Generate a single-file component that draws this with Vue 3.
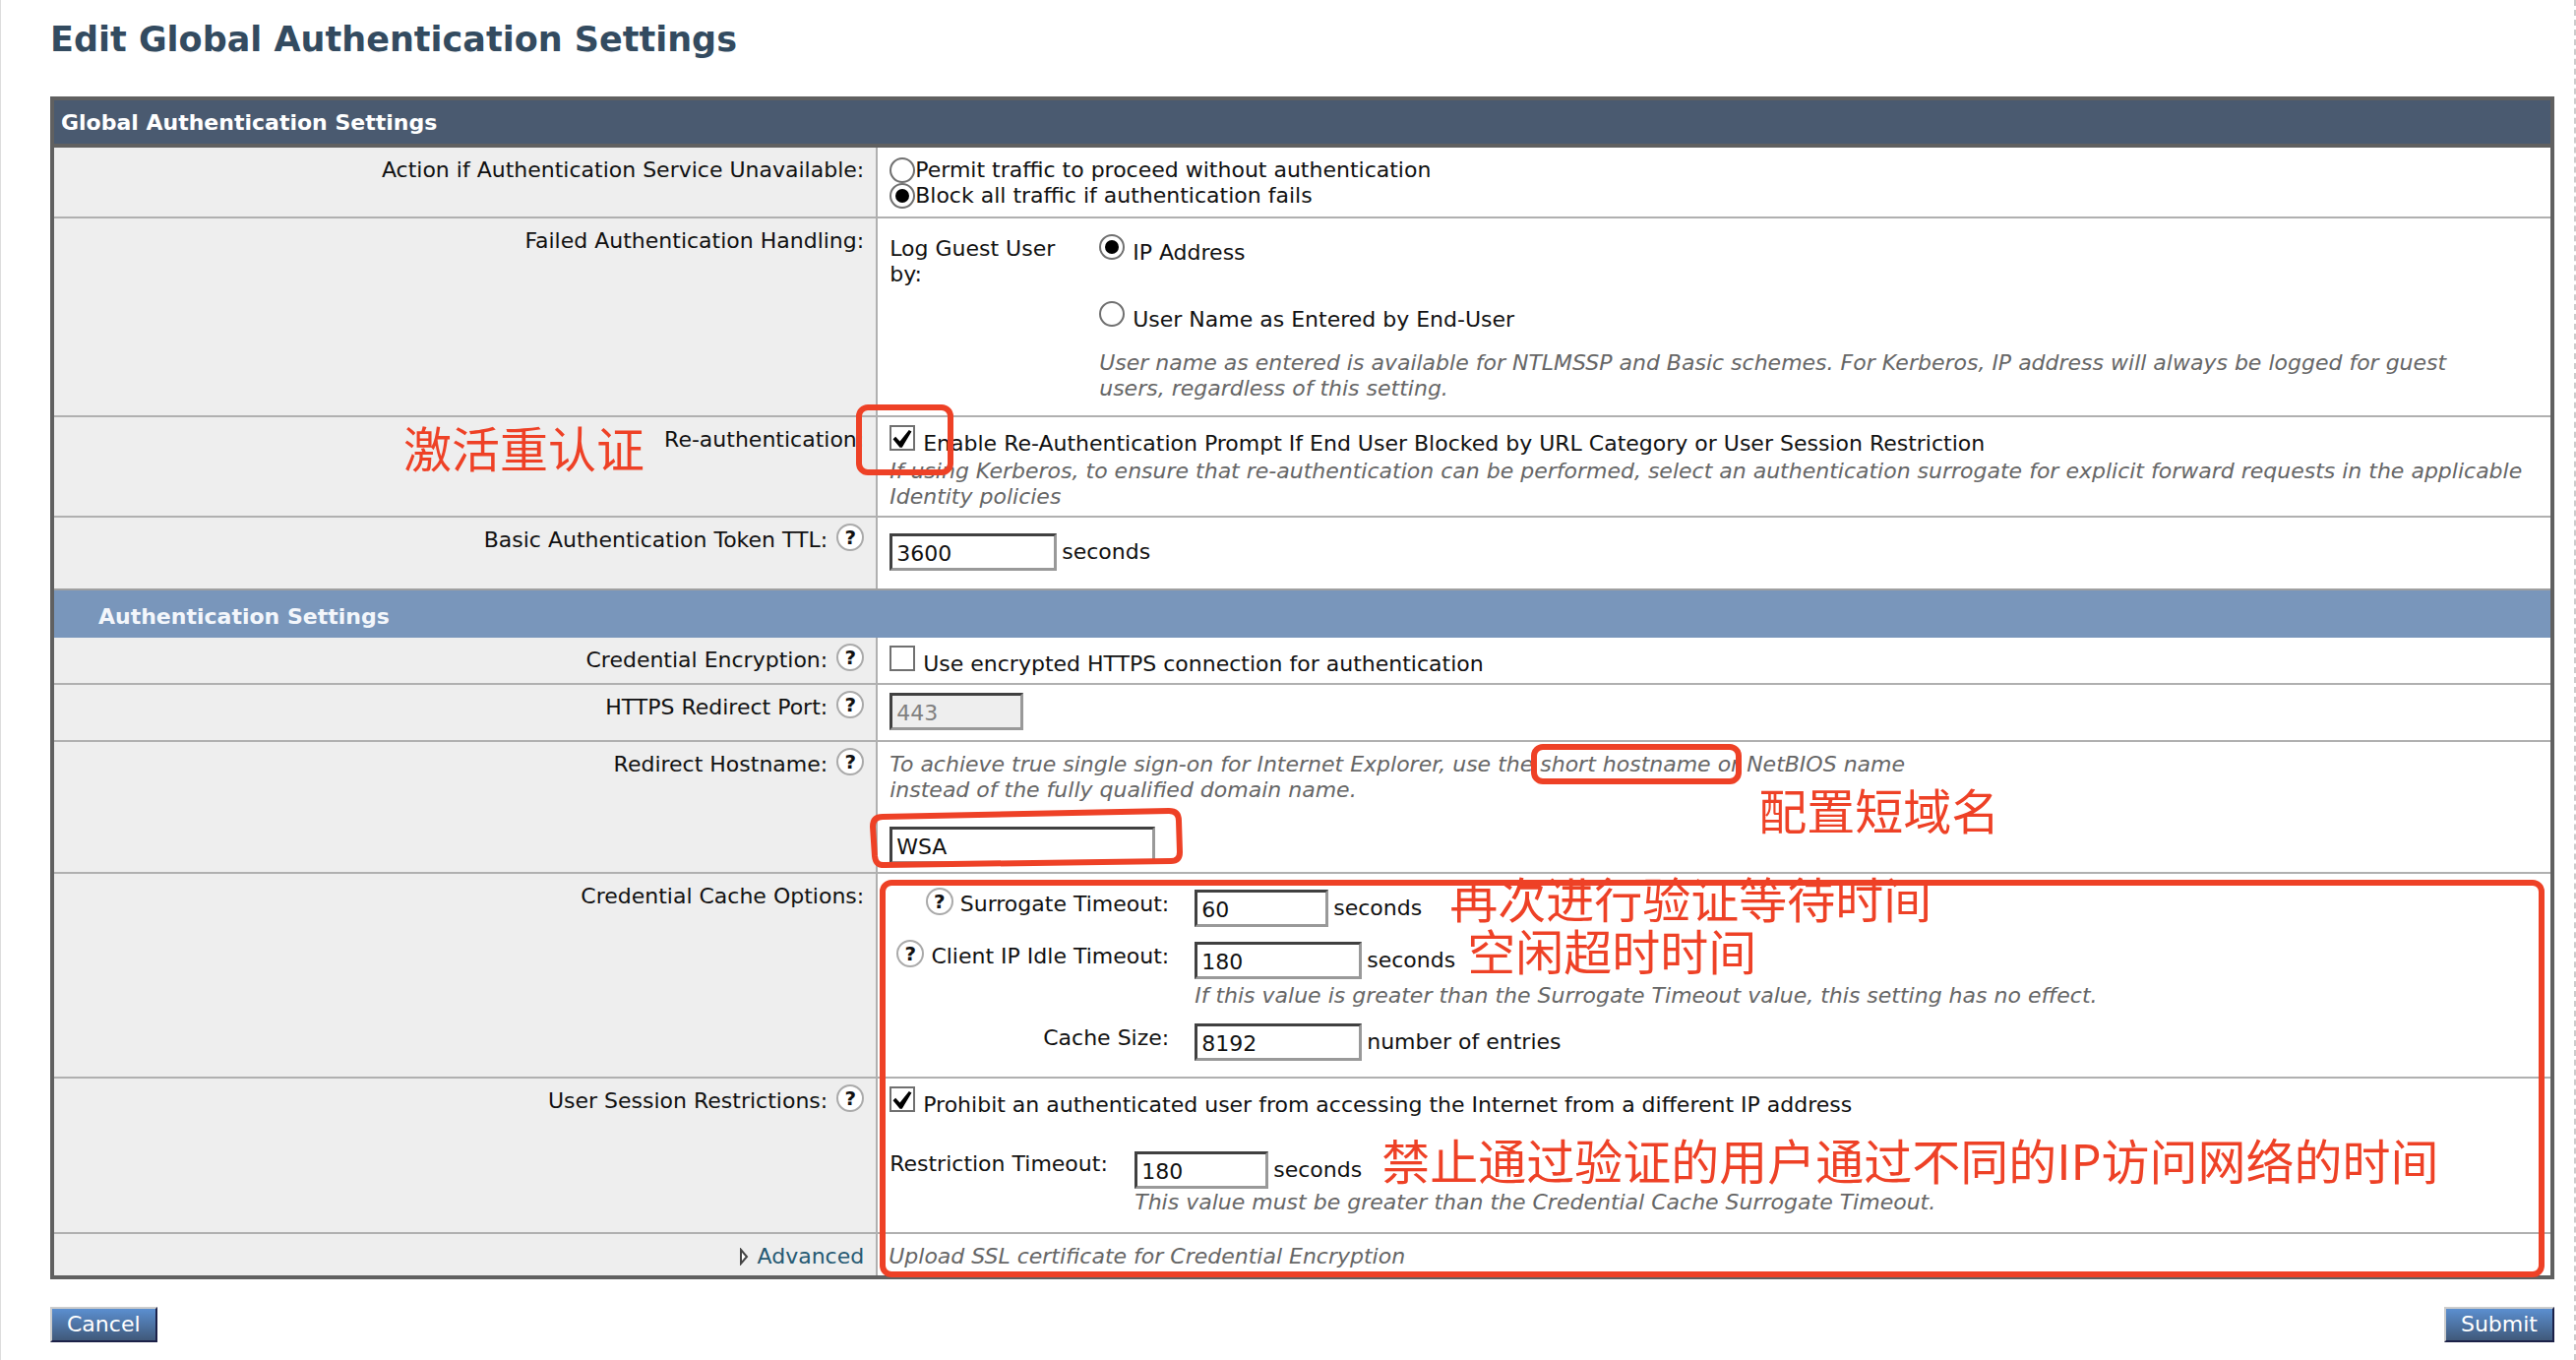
<script setup>
import { reactive } from 'vue'

const form = reactive({
  unavailable: 'block',
  guestLog: 'ip',
  reauth: true,
  ttl: '3600',
  encrypt: false,
  port: '443',
  hostname: 'WSA',
  surrogate: '60',
  idle: '180',
  cacheSize: '8192',
  prohibit: true,
  restriction: '180'
})
</script>

<template>
  <main class="page">
    <h1>Edit Global Authentication Settings</h1>

    <form id="auth-form" class="panel" @submit.prevent>
      <h2 class="panel-head">Global Authentication Settings</h2>

      <div class="row">
        <div class="name">Action if Authentication Service Unavailable:</div>
        <div class="value tight-options">
          <label class="plain"><input v-model="form.unavailable" type="radio" name="unavailable" value="permit" />Permit traffic to proceed without authentication</label>
          <label class="plain"><input v-model="form.unavailable" type="radio" name="unavailable" value="block" />Block all traffic if authentication fails</label>
        </div>
      </div>

      <div class="row">
        <div class="name">Failed Authentication Handling:</div>
        <div class="value guest">
          <div class="guest-label">Log Guest User by:</div>
          <div class="guest-options">
            <label class="option"><input v-model="form.guestLog" type="radio" name="guest" value="ip" /><span>IP Address</span></label>
            <label class="option"><input v-model="form.guestLog" type="radio" name="guest" value="name" /><span>User Name as Entered by End-User</span></label>
            <p class="hint">User name as entered is available for NTLMSSP and Basic schemes. For Kerberos, IP address will always be logged for guest<br />users, regardless of this setting.</p>
          </div>
        </div>
      </div>

      <div class="row">
        <div class="name"><span class="anchor">Re-authentication:<span class="note before">激活重认证</span></span></div>
        <div class="value">
          <span class="mark reauth-mark"></span>
          <label class="option"><input v-model="form.reauth" type="checkbox" /><span>Enable Re-Authentication Prompt If End User Blocked by URL Category or User Session Restriction</span></label>
          <p class="hint after-option">If using Kerberos, to ensure that re-authentication can be performed, select an authentication surrogate for explicit forward requests in the applicable<br />Identity policies</p>
        </div>
      </div>

      <div class="row">
        <div class="name"><label for="ttl">Basic Authentication Token TTL:</label><button type="button" class="help" aria-label="Help">?</button></div>
        <div class="value roomy">
          <div class="field"><input id="ttl" v-model="form.ttl" class="text medium" type="text" />seconds</div>
        </div>
      </div>

      <h3 class="section-head">Authentication Settings</h3>

      <div class="row first">
        <div class="name">Credential Encryption:<button type="button" class="help" aria-label="Help">?</button></div>
        <div class="value">
          <label class="option"><input v-model="form.encrypt" type="checkbox" /><span>Use encrypted HTTPS connection for authentication</span></label>
        </div>
      </div>

      <div class="row">
        <div class="name"><label for="port">HTTPS Redirect Port:</label><button type="button" class="help" aria-label="Help">?</button></div>
        <div class="value port">
          <div class="field"><input id="port" v-model="form.port" class="text short" type="text" disabled /></div>
        </div>
      </div>

      <div class="row">
        <div class="name"><label for="hostname">Redirect Hostname:</label><button type="button" class="help" aria-label="Help">?</button></div>
        <div class="value host">
          <p class="hint">To achieve true single sign-on for Internet Explorer, use the <span class="anchor">short hostname<span class="mark short-mark"></span></span> or <span class="anchor">NetBIOS name<span class="note below">配置短域名</span></span><br />instead of the fully qualified domain name.</p>
          <div class="field">
            <input id="hostname" v-model="form.hostname" class="text long" type="text" />
            <svg class="host-mark" width="320" height="62" viewBox="0 0 320 62" aria-hidden="true">
              <path d="M13 10 L304 4 Q314 4 314 14 L315 46 Q315 55 306 55 L15 59 Q6 60 5 50 L3 20 Q3 10 13 10Z" />
            </svg>
          </div>
        </div>
      </div>

      <div class="group">
        <span class="mark group-mark"></span>
        <div class="row">
          <div class="name">Credential Cache Options:</div>
          <div class="value cache">
            <div class="cache-name"><button type="button" class="help" aria-label="Help">?</button><label for="surrogate">Surrogate Timeout:</label></div>
            <div class="field"><input id="surrogate" v-model="form.surrogate" class="text short" type="text" /><span class="anchor">seconds<span class="note after wide">再次进行验证等待时间</span></span></div>

            <div class="cache-name"><button type="button" class="help" aria-label="Help">?</button><label for="idle">Client IP Idle Timeout:</label></div>
            <div>
              <div class="field"><input id="idle" v-model="form.idle" class="text medium" type="text" /><span class="anchor">seconds<span class="note after">空闲超时时间</span></span></div>
              <p class="hint after-field">If this value is greater than the Surrogate Timeout value, this setting has no effect.</p>
            </div>

            <div class="cache-name"><label for="cache-size">Cache Size:</label></div>
            <div class="field"><input id="cache-size" v-model="form.cacheSize" class="text medium" type="text" />number of entries</div>
          </div>
        </div>

        <div class="row">
          <div class="name">User Session Restrictions:<button type="button" class="help" aria-label="Help">?</button></div>
          <div class="value">
            <label class="option"><input v-model="form.prohibit" type="checkbox" /><span>Prohibit an authenticated user from accessing the Internet from a different IP address</span></label>
            <div class="restriction">
              <label for="restriction">Restriction Timeout:</label>
              <div>
                <div class="field"><input id="restriction" v-model="form.restriction" class="text short" type="text" /><span class="anchor">seconds<span class="note after middle">禁止通过验证的用户通过不同的IP访问网络的时间</span></span></div>
                <p class="hint">This value must be greater than the Credential Cache Surrogate Timeout.</p>
              </div>
            </div>
          </div>
        </div>

        <div class="row">
          <div class="name">
            <svg class="arrow" width="10" height="18" viewBox="0 0 10 18" aria-hidden="true"><path d="M2 2 L8 9 L2 16Z" /></svg>
            <a href="#advanced">Advanced</a>
          </div>
          <div class="value last"><p class="hint">Upload SSL certificate for Credential Encryption</p></div>
        </div>
      </div>
    </form>

    <footer class="actions">
      <button type="button" class="action">Cancel</button>
      <button type="submit" form="auth-form" class="action">Submit</button>
    </footer>
  </main>
</template>

<style>
body {
  background: #fff;
}
</style>

<style scoped>
.page {
  box-sizing: border-box;
  min-height: 100vh;
  padding: 16px 20px 18px 50px;
  border-left: 1px solid #ddd;
  border-right: 2px dashed #ccc;
  color: #111;
  font: 22px/26px "DejaVu Sans", sans-serif;
}
.page * {
  box-sizing: border-box;
}
h1, h2, h3, p {
  margin: 0;
}
h1 {
  margin-bottom: 34px;
  color: #334b60;
  font-size: 35px;
  line-height: 48px;
}
.panel {
  border: 4px solid #606060;
  background: #fff;
}
.panel-head {
  padding: 10px 7px 8px;
  border-bottom: 4px solid #606060;
  background: #4a5a70;
  color: #fff;
  font-size: 22px;
  line-height: 26px;
}
.section-head {
  padding: 14px 45px 8px;
  border-top: 2px solid #a0a0a0;
  background: #7996bb;
  color: #f3f6fb;
  font-size: 22px;
  line-height: 26px;
}
.row {
  display: grid;
  grid-template-columns: 33% minmax(0, 1fr);
  border-top: 2px solid #b0b0b0;
}
.panel-head + .row,
.row.first {
  border-top: 0;
}
.name {
  display: flex;
  justify-content: flex-end;
  align-items: flex-start;
  gap: 9px;
  padding: 10px 12px 6px;
  border-right: 2px solid #b0b0b0;
  background: #eee;
}
.name .help {
  margin-top: -4px;
}
.value {
  position: relative;
  padding: 8px 12px 6px;
}
.help {
  width: 28px;
  height: 28px;
  flex: none;
  padding: 0;
  border: 2px solid #aaa;
  border-radius: 50%;
  background: #fff;
  color: #111;
  font: bold 20px/24px "DejaVu Sans", sans-serif;
  text-align: center;
}
.tight-options {
  padding: 10px 12px 8px;
}
.plain {
  display: flex;
}
.plain input {
  margin-top: -2px;
}
.option {
  display: flex;
  gap: 8px;
}
.option span {
  margin-top: 6px;
}
input[type="radio"],
input[type="checkbox"] {
  appearance: none;
  width: 26px;
  height: 26px;
  flex: none;
  margin: 0;
  border: 2px solid #707070;
  background: #fff;
}
input[type="radio"] {
  border-radius: 50%;
}
input[type="radio"]:checked::before,
input[type="checkbox"]:checked::before {
  content: "";
  display: block;
  background: #000;
}
input[type="radio"]:checked::before {
  width: 14px;
  height: 14px;
  margin: 4px;
  border-radius: 50%;
}
input[type="checkbox"]:checked::before {
  width: 22px;
  height: 22px;
  clip-path: polygon(6% 56%, 18% 44%, 38% 66%, 80% 14%, 92% 20%, 48% 94%, 38% 94%);
}
.hint {
  color: #666;
  font-style: italic;
}
.guest {
  display: flex;
  padding: 16px 12px 14px;
}
.guest-label {
  width: 213px;
  flex: none;
  padding: 2px 34px 0 0;
}
.guest-options .option + .option {
  margin-top: 36px;
}
.guest-options .hint {
  margin-top: 18px;
}
.after-option {
  margin-top: 2px;
}
.roomy {
  padding: 16px 12px 18px;
}
.field {
  position: relative;
  display: flex;
  align-items: center;
  gap: 5px;
  line-height: 44px;
  height: 38px;
}
.text {
  height: 38px;
  margin: 0;
  padding: 3px 4px 0;
  border: 3px solid;
  border-color: #404040 #999 #999 #404040;
  border-radius: 0;
  background: #fff;
  color: #111;
  font: 22px/26px "DejaVu Sans", sans-serif;
}
.text:disabled {
  background: #eee;
  color: #808080;
}
.short {
  width: 136px;
}
.medium {
  width: 170px;
}
.long {
  width: 270px;
}
.port {
  padding: 8px 12px 10px;
}
.host {
  padding: 10px 12px 8px;
}
.host .field {
  margin-top: 24px;
}
.cache {
  display: grid;
  grid-template-columns: 284px minmax(0, 1fr);
  column-gap: 26px;
  row-gap: 15px;
  padding: 16px 12px;
}
.cache-name {
  display: flex;
  justify-content: flex-end;
  align-items: flex-start;
  gap: 7px;
  padding-top: 2px;
}
.cache-name .help {
  margin-top: -4px;
}
.after-field {
  margin-top: 4px;
}
.restriction {
  display: flex;
  padding: 34px 0 11px;
}
.restriction > label {
  width: 249px;
  flex: none;
}
.restriction .hint {
  margin-top: 1px;
}
.last {
  padding: 10px 11px 6px;
}
.arrow {
  margin: 4px 0 0;
  fill: #fff;
  stroke: #444;
  stroke-width: 2;
}
a {
  color: #265a73;
  text-decoration: none;
}

/* Reviewer's red marks and notes */
.group,
.anchor {
  position: relative;
}
.mark {
  position: absolute;
  z-index: 1;
  border: 6px solid #ee4126;
  border-radius: 12px;
  pointer-events: none;
}
.reauth-mark {
  top: -13px;
  left: -22px;
  width: 99px;
  height: 72px;
}
.short-mark {
  inset: -8px -31px -8px -9px;
}
.group-mark {
  inset: 8px 6px -2px 839px;
}
.host-mark {
  position: absolute;
  top: -20px;
  left: -20px;
  fill: none;
  stroke: #ee4126;
  stroke-width: 6;
}
.note {
  position: absolute;
  color: #ee4126;
  font: 49px/44px "Noto Sans CJK SC", sans-serif;
  white-space: nowrap;
}
.before {
  top: -2px;
  right: 100%;
  margin-right: 20px;
}
.below {
  top: 36px;
  left: 12px;
}
.after {
  top: 50%;
  left: 100%;
  margin: -33px 0 0 12px;
}
.after.middle {
  margin-left: 20px;
}
.after.wide {
  margin-left: 28px;
}

.actions {
  display: flex;
  justify-content: space-between;
  padding-top: 28px;
}
.action {
  height: 36px;
  padding: 0 15px;
  border: 2px solid;
  border-color: #ccc #1c2148 #1c2148 #ccc;
  background: linear-gradient(#5b8fd0, #40597a);
  color: #fff;
  font: 22px/30px "DejaVu Sans", sans-serif;
}
</style>
